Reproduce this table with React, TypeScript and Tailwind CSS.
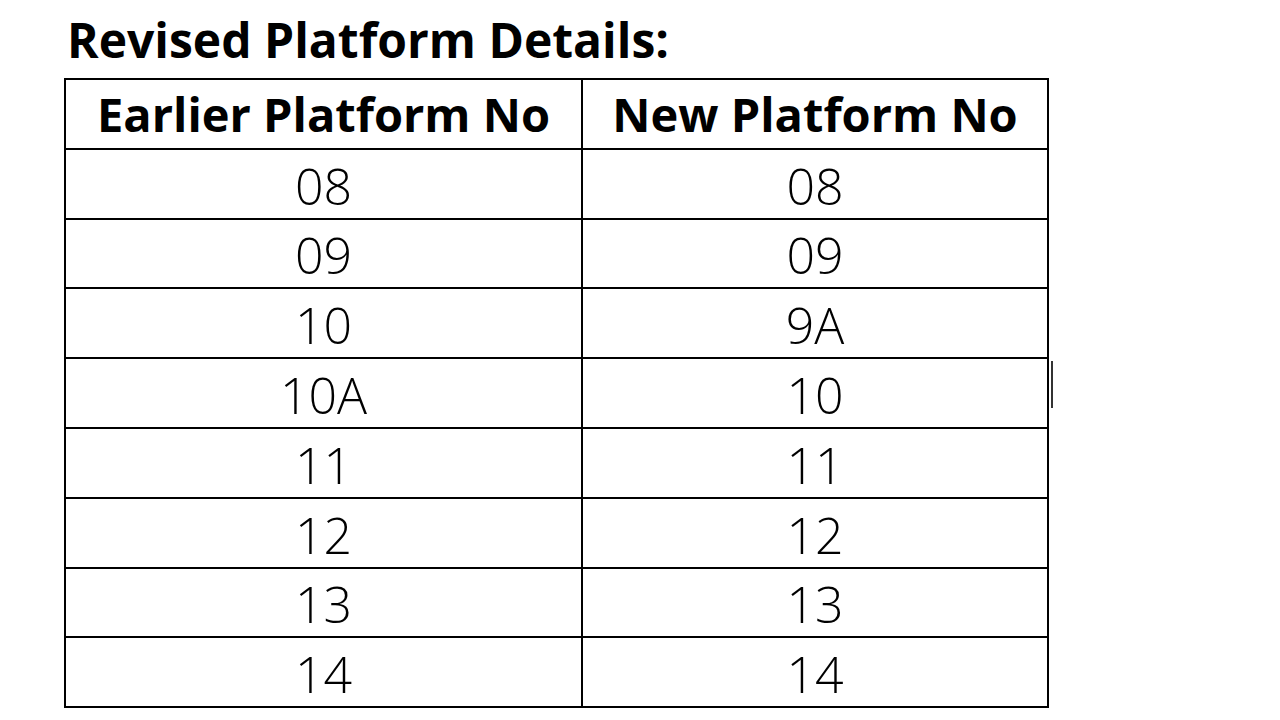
const rows = [
  ["08", "08"],
  ["09", "09"],
  ["10", "9A"],
  ["10A", "10"],
  ["11", "11"],
  ["12", "12"],
  ["13", "13"],
  ["14", "14"],
];

export default function App() {
  return (
    <div className="w-[1280px] h-[720px] bg-white text-black overflow-hidden" style={{ fontFamily: '"Open Sans", "Noto Sans", sans-serif' }}>
      <div className="pl-[64px] pt-[10px]">
        <h1 className="pl-[3px] text-[48px] leading-[60px] font-bold">Revised Platform Details:</h1>
        <div className="relative w-fit mt-[8px]">
          <table className="border-collapse border-2 border-black">
            <thead>
              <tr className="h-[69.8px]">
                <th className="w-[517px] border-2 border-black text-[47px] leading-none font-bold text-center p-0 pt-[2px]">Earlier Platform No</th>
                <th className="w-[466px] border-2 border-black text-[47px] leading-none font-bold text-center p-0 pt-[2px]">New Platform No</th>
              </tr>
            </thead>
            <tbody>
              {rows.map(([a, b], i) => (
                <tr key={i} className="h-[69.8px]">
                  <td className="border-2 border-black text-[50px] leading-none font-light text-center p-0 pt-[4px]">{a}</td>
                  <td className="border-2 border-black text-[50px] leading-none font-light text-center p-0 pt-[4px]">{b}</td>
                </tr>
              ))}
            </tbody>
          </table>
          <div className="absolute left-[987px] top-[283px] w-[2px] h-[47px] bg-[#333]" />
        </div>
      </div>
    </div>
  );
}
